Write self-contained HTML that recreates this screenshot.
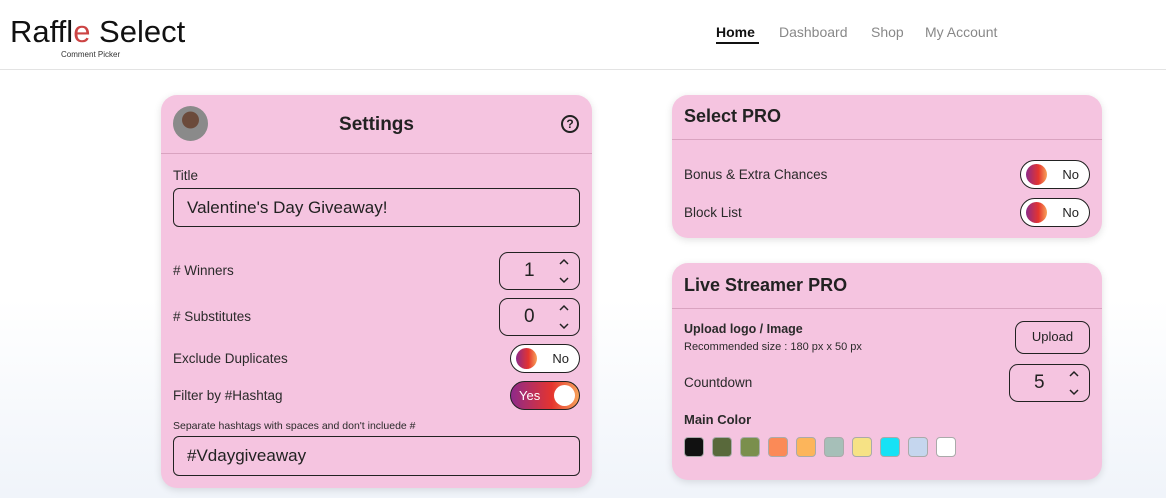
<!DOCTYPE html>
<html><head><style>
*{box-sizing:border-box;margin:0;padding:0}
body{width:1166px;height:498px;overflow:hidden;font-family:"Liberation Sans",sans-serif;color:#222;background:linear-gradient(#fff 60%,#f0f4fa);position:relative}
.hdr{position:absolute;left:0;top:0;width:1166px;height:70px;border-bottom:1px solid #e3e3e3;background:#fff}
.a{position:absolute}
.card{position:absolute;background:#f5c4e0;border-radius:16px;box-shadow:0 2px 8px rgba(0,0,0,.12)}
.line{position:absolute;left:0;right:0;height:1px;background:#d9a3c0}
.t{position:absolute;font-size:13.5px;color:#2a2a2a}
.inp{position:absolute;border:1.5px solid #222;border-radius:6px}
.tog{position:absolute;width:70px;height:29px;border:1.5px solid #222;border-radius:15px;background:#fff}
.tog .k{position:absolute;left:5px;top:3px;width:21px;height:21px;border-radius:50%;background:linear-gradient(90deg,#8e2a8a,#e5342e 60%,#f7a35a)}
.tog span{position:absolute;right:10px;top:6px;font-size:13px}
.num{position:absolute;width:81px;height:38px;border:1.5px solid #222;border-radius:9px;font-size:19px}
.num b{font-weight:normal;position:absolute;left:24px;top:7px}
.num svg{position:absolute;right:9px;top:5px}
.sw{position:absolute;top:437px;width:20px;height:20px;border-radius:4px;border:1px solid #aaa}
</style></head><body>
<div class="hdr">
 <div class="a" style="left:10px;top:14px;font-size:31px;color:#111">Raffl<span style="color:#c44">e</span> Select</div>
 <div class="a" style="left:61px;top:50px;font-size:8px;color:#333">Comment Picker</div>
 <div class="a" style="left:716px;top:24px;font-size:14px;font-weight:bold;color:#111">Home</div>
 <div class="a" style="left:716px;top:42px;width:43px;height:2px;background:#111"></div>
 <div class="a" style="left:779px;top:24px;font-size:14px;color:#888">Dashboard</div>
 <div class="a" style="left:871px;top:24px;font-size:14px;color:#888">Shop</div>
 <div class="a" style="left:925px;top:24px;font-size:14px;color:#888">My Account</div>
</div>

<div class="card" style="left:161px;top:95px;width:431px;height:393px">
 <div class="a" style="left:12px;top:11px;width:35px;height:35px;border-radius:50%;background:radial-gradient(circle at 50% 40%,#6b4a3a 30%,#8a8a8a 32%)"></div>
 <div class="a" style="left:0;width:100%;top:19px;text-align:center;font-size:19px;font-weight:bold">Settings</div>
 <div class="a" style="left:400px;top:20px;width:18px;height:18px;border:2px solid #222;border-radius:50%;font-size:12px;font-weight:bold;text-align:center;line-height:14px">?</div>
 <div class="line" style="top:58px"></div>
 <div class="t" style="left:12px;top:73px">Title</div>
 <div class="inp" style="left:12px;top:93px;width:407px;height:39px"><span class="a" style="left:13px;top:9px;font-size:17px">Valentine's Day Giveaway!</span></div>
 <div class="t" style="left:12px;top:168px"># Winners</div>
 <div class="num" style="left:338px;top:157px"><b>1</b><svg width="12" height="26" viewBox="0 0 12 26" fill="none" stroke="#222" stroke-width="1.5"><path d="M2 6l4-4 4 4M2 20l4 4 4-4"/></svg></div>
 <div class="t" style="left:12px;top:214px"># Substitutes</div>
 <div class="num" style="left:338px;top:203px"><b>0</b><svg width="12" height="26" viewBox="0 0 12 26" fill="none" stroke="#222" stroke-width="1.5"><path d="M2 6l4-4 4 4M2 20l4 4 4-4"/></svg></div>
 <div class="t" style="left:12px;top:256px">Exclude Duplicates</div>
 <div class="tog" style="left:349px;top:249px"><div class="k"></div><span>No</span></div>
 <div class="t" style="left:12px;top:293px">Filter by #Hashtag</div>
 <div class="tog" style="left:349px;top:286px;background:linear-gradient(90deg,#8e2a8a,#e5342e 60%,#f7a35a)"><span style="left:8px;right:auto;color:#fff">Yes</span><div class="k" style="left:43px;background:#fff"></div></div>
 <div class="t" style="left:12px;top:325px;font-size:10.5px">Separate hashtags with spaces and don't incluede #</div>
 <div class="inp" style="left:12px;top:341px;width:407px;height:40px"><span class="a" style="left:13px;top:9px;font-size:17px">#Vdaygiveaway</span></div>
</div>

<div class="card" style="left:672px;top:95px;width:430px;height:143px">
 <div class="a" style="left:12px;top:11px;font-size:18px;font-weight:bold">Select PRO</div>
 <div class="line" style="top:44px"></div>
 <div class="t" style="left:12px;top:72px">Bonus &amp; Extra Chances</div>
 <div class="tog" style="left:348px;top:65px"><div class="k"></div><span>No</span></div>
 <div class="t" style="left:12px;top:110px">Block List</div>
 <div class="tog" style="left:348px;top:103px"><div class="k"></div><span>No</span></div>
</div>

<div class="card" style="left:672px;top:263px;width:430px;height:217px">
 <div class="a" style="left:12px;top:12px;font-size:18px;font-weight:bold">Live Streamer PRO</div>
 <div class="line" style="top:45px"></div>
 <div class="t" style="left:12px;top:59px;font-size:12.5px;font-weight:bold">Upload logo / Image</div>
 <div class="t" style="left:12px;top:78px;font-size:11px">Recommended size : 180 px x 50 px</div>
 <div class="a" style="left:343px;top:58px;width:75px;height:33px;border:1.5px solid #222;border-radius:9px;font-size:13px;text-align:center;line-height:30px">Upload</div>
 <div class="t" style="left:12px;top:112px">Countdown</div>
 <div class="num" style="left:337px;top:101px"><b>5</b><svg width="12" height="26" viewBox="0 0 12 26" fill="none" stroke="#222" stroke-width="1.5"><path d="M2 6l4-4 4 4M2 20l4 4 4-4"/></svg></div>
 <div class="t" style="left:12px;top:149px;font-weight:bold;font-size:13px">Main Color</div>
</div>
<div class="sw" style="left:684px;background:#111"></div>
<div class="sw" style="left:712px;background:#59693b"></div>
<div class="sw" style="left:740px;background:#7a8f4c"></div>
<div class="sw" style="left:768px;background:#fb8a57"></div>
<div class="sw" style="left:796px;background:#fcb55b"></div>
<div class="sw" style="left:824px;background:#a6bfb8"></div>
<div class="sw" style="left:852px;background:#f6e285"></div>
<div class="sw" style="left:880px;background:#16e2f5"></div>
<div class="sw" style="left:908px;background:#c5d6ee"></div>
<div class="sw" style="left:936px;background:#fff"></div>
</body></html>
